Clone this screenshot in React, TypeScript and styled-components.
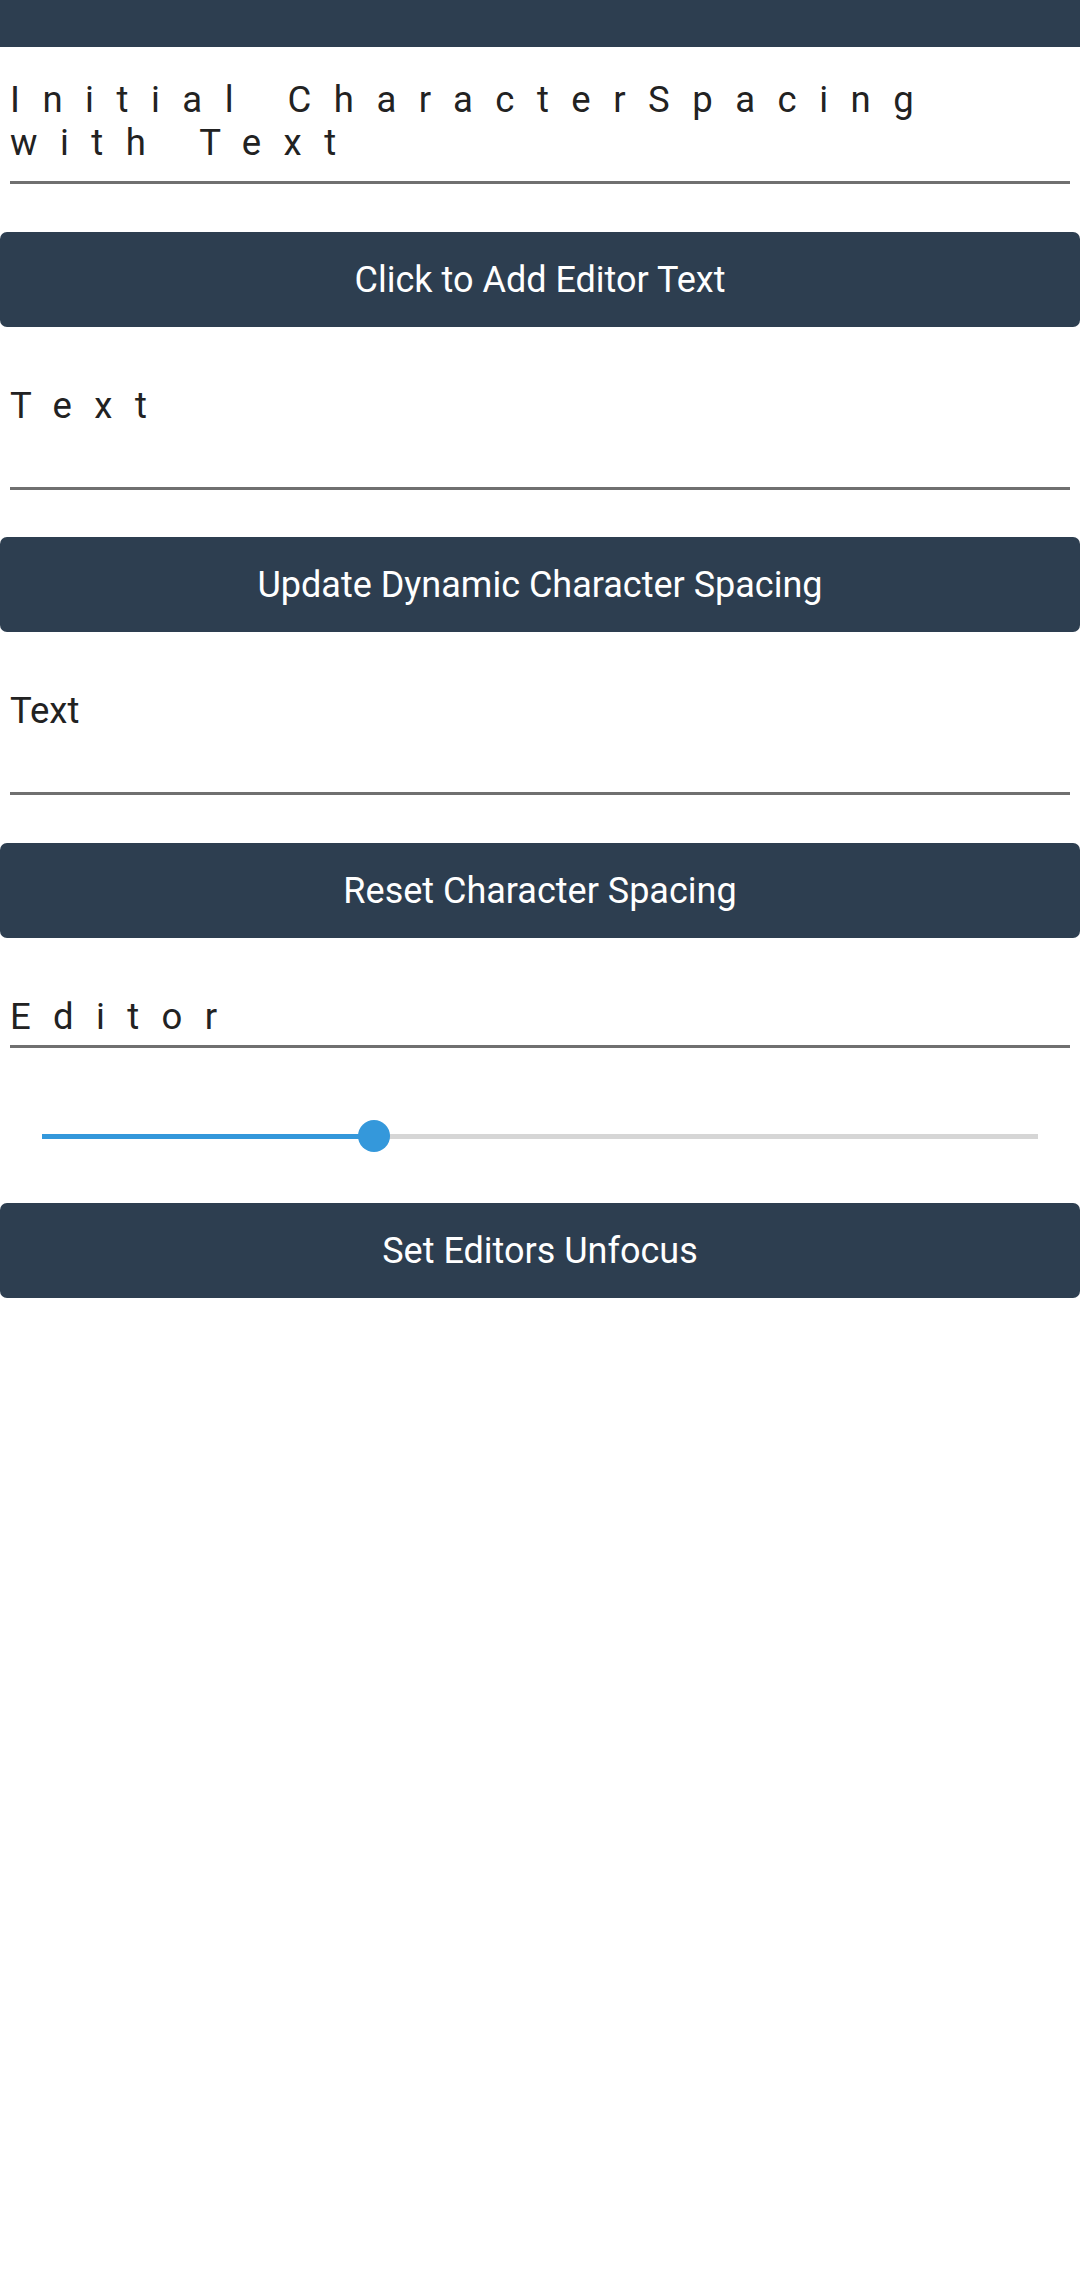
import React from 'react';
import styled, { createGlobalStyle } from 'styled-components';

const GlobalStyle = createGlobalStyle`
  html, body {
    margin: 0;
    padding: 0;
    background: #ffffff;
    font-family: Roboto, "Noto Sans", sans-serif;
  }
`;

const Page = styled.div`
  width: 1080px;
  min-height: 2289px;
  background: #ffffff;
  display: flex;
  flex-direction: column;
`;

const TopBar = styled.div`
  height: 47px;
  background: #2d3e50;
`;

const Entry = styled.div<{ $top: number; $bottom: number; $spaced?: boolean }>`
  margin: 0 10px;
  padding-top: ${(p) => p.$top}px;
  padding-bottom: ${(p) => p.$bottom}px;
  border-bottom: 3px solid #707070;
  font-size: 36.5px;
  line-height: 43px;
  color: #222222;
  letter-spacing: ${(p) => (p.$spaced ? '22.5px' : 'normal')};
`;

const Button = styled.button<{ $top: number }>`
  margin-top: ${(p) => p.$top}px;
  height: 95px;
  width: 100%;
  border: none;
  border-radius: 7px;
  background: #2d3e50;
  color: #ffffff;
  font-family: Roboto, "Noto Sans", sans-serif;
  font-size: 36px;
  display: flex;
  align-items: center;
  justify-content: center;
  padding: 0;
`;

const SliderRow = styled.div`
  margin: 72px 42px 51px;
  height: 32px;
  position: relative;
  display: flex;
  align-items: center;
`;

const Track = styled.div`
  flex: 1;
  height: 5px;
  background: #d6d6d6;
  display: flex;
`;

const Fill = styled.div`
  height: 100%;
  background: #3498db;
`;

const Thumb = styled.div`
  position: absolute;
  top: 0;
  width: 32px;
  height: 32px;
  margin-left: -16px;
  border-radius: 50%;
  background: #3498db;
`;

const Slider: React.FC<{ value: number }> = ({ value }) => {
  const pct = `${value * 100}%`;
  return (
    <SliderRow>
      <Track>
        <Fill style={{ width: pct }} />
      </Track>
      <Thumb style={{ left: pct }} />
    </SliderRow>
  );
};

const App: React.FC = () => {
  return (
    <Page>
      <GlobalStyle />
      <TopBar />

      <Entry $top={31} $bottom={17} $spaced>
        Initial CharacterSpacing with Text
      </Entry>
      <Button $top={48}>Click to Add Editor Text</Button>

      <Entry $top={57} $bottom={60} $spaced>
        Text
      </Entry>
      <Button $top={47}>Update Dynamic Character Spacing</Button>

      <Entry $top={57} $bottom={60}>
        Text
      </Entry>
      <Button $top={48}>Reset Character Spacing</Button>

      <Entry $top={57} $bottom={7} $spaced>
        Editor
      </Entry>
      <Slider value={0.333} />
      <Button $top={0}>Set Editors Unfocus</Button>
    </Page>
  );
};

export default App;
